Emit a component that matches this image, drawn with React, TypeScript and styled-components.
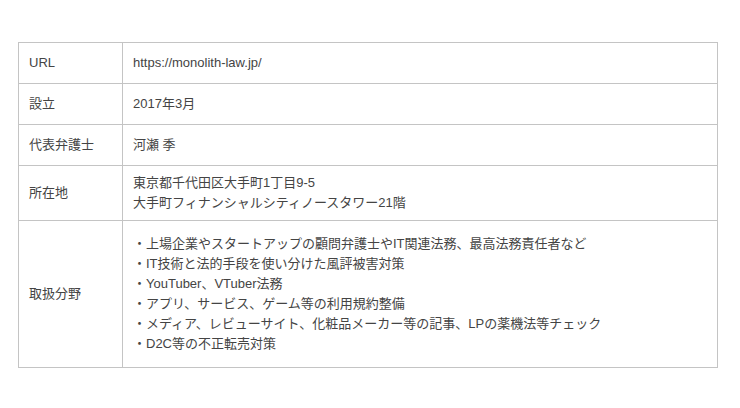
import React from 'react';
import styled, { createGlobalStyle } from 'styled-components';

const GlobalStyle = createGlobalStyle`
  body {
    margin: 0;
    padding: 0;
    background: #ffffff;
    font-family: "Liberation Sans", "Noto Sans CJK JP", sans-serif;
  }
`;

const Page = styled.div`
  width: 740px;
  height: 408px;
  padding: 42px 22px 0 18px;
  box-sizing: border-box;
`;

const Table = styled.table`
  width: 700px;
  border-collapse: collapse;
  table-layout: fixed;
  font-size: 13px;
  line-height: 20px;
  color: #444444;
`;

const Row = styled.tr<{ $h: number }>`
  height: ${(p) => p.$h}px;
`;

const HeadCell = styled.th`
  width: 83px;
  padding: 0 10px;
  border: 1px solid #c4c4c4;
  text-align: left;
  font-weight: normal;
  vertical-align: middle;
`;

const Cell = styled.td`
  padding: 0 10px;
  border: 1px solid #c4c4c4;
  vertical-align: middle;
`;

const Line = styled.div`
  white-space: nowrap;
`;

const rows: { label: string; lines: string[]; h: number }[] = [
  { label: 'URL', lines: ['https://monolith-law.jp/'], h: 41 },
  { label: '設立', lines: ['2017年3月'], h: 41 },
  { label: '代表弁護士', lines: ['河瀬 季'], h: 41 },
  { label: '所在地', lines: ['東京都千代田区大手町1丁目9-5', '大手町フィナンシャルシティノースタワー21階'], h: 55 },
  {
    label: '取扱分野',
    lines: [
      '・上場企業やスタートアップの顧問弁護士やIT関連法務、最高法務責任者など',
      '・IT技術と法的手段を使い分けた風評被害対策',
      '・YouTuber、VTuber法務',
      '・アプリ、サービス、ゲーム等の利用規約整備',
      '・メディア、レビューサイト、化粧品メーカー等の記事、LPの薬機法等チェック',
      '・D2C等の不正転売対策',
    ],
    h: 147,
  },
];

const App = (): JSX.Element => {
  return (
    <>
      <GlobalStyle />
      <Page>
        <Table>
          <tbody>
            {rows.map((r) => (
              <Row key={r.label} $h={r.h}>
                <HeadCell>{r.label}</HeadCell>
                <Cell>
                  {r.lines.map((l) => (
                    <Line key={l}>{l}</Line>
                  ))}
                </Cell>
              </Row>
            ))}
          </tbody>
        </Table>
      </Page>
    </>
  );
};

export default App;
